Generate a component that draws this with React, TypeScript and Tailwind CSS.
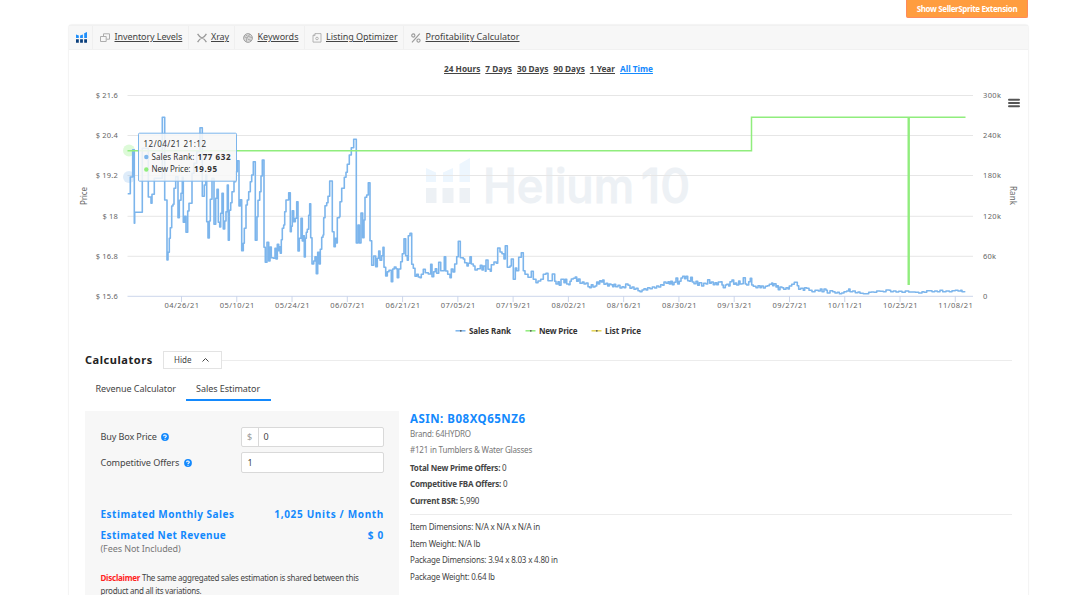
import React from 'react';

// Sales rank samples, grouped in blocks: each pair is (x, y) in thirds of a pixel from the block origin
const rankBlocks = [
  {
    x: 70, y: 85,
    points: '173,326 181,276 188,194 193,415 194,382 217,190 235,336 243,355 246,328 253,280 277,97 284,345 291,525 294,502 298,460 301,428 305,363 309,358 312,310 317,275 324,398 328,346 333,325 337,277 340,412 344,394 348,442 353,378 357,355 366,265 372,235 380,200 390,128 397,334 403,300 407,270 410,410 414,459 418,408 421,343 426,280 432,418 437,340 441,313 445,412 449,426 452,385 456,325 460,432 464,408 468,380 472,300 475,466 478,376 482,353 486,320 492,290 497,260 502,227 507,363 511,344 515,497 520,475 523,430 528,360 532,345 536,320 541,290 545,270 550,230 556,466 561,395 564,346 569,320 573,273 577,225',
  },
  {
    x: 250, y: 85,
    points: '42,487 46,532 51,472 56,528 60,486 64,518 70,520 75,490 78,522 82,478 86,497 89,485 91,505 94,464 97,430 101,420 104,380 108,345 116,323 121,440 124,424 127,377 131,410 136,400 140,350 144,498 148,460 153,400 157,468 160,452 163,516 166,460 169,442 172,433 176,391 179,356 182,458 186,537 191,528 195,515 199,566 203,502 208,537 211,493 215,457 219,450 221,398 225,362 230,353 234,334 239,288 247,440 252,485 256,460 260,474 262,398 268,395 270,350 275,310 283,277 288,262 292,238 298,210 304,188 311,163 319,474 324,420 328,474 333,384 338,458 342,405 345,337 350,330 355,293 360,467 365,541 371,513 377,545 382,520 386,498 390,526 395,512 399,487 402,547 407,573 412,560 417,556 424,590 428,552 433,546 438,551 442,578 446,552 452,530 457,506 462,461 467,512 472,526 475,452 480,445 485,538 490,550 495,574 500,568 505,576',
  },
  {
    x: 420, y: 140,
    points: '0,413 4,403 10,388 16,398 25,402 32,373 36,410 41,395 46,386 50,400 56,367 62,392 69,392 73,350 77,393 83,403 90,413 94,387 99,396 104,372 110,350 115,304 121,353 130,357 134,368 141,378 145,370 150,350 154,372 160,378 165,390 172,386 181,376 186,390 190,378 196,394 198,360 204,388 211,394 214,374 222,366 229,370 233,324 240,336 246,341 252,357 256,317 262,382 270,378 274,357 280,418 286,384 290,392 296,352 304,338 310,392 315,403 324,412 334,394 340,418 348,428 354,423 362,418 370,403 378,400 384,422 397,402 404,424 408,432 414,425 418,436 423,418 428,418 432,428 436,418 440,432 446,434 450,424 454,417 460,415 466,411 470,424 475,417 480,430 487,426 492,432 498,429 504,440 509,443 514,434 519,441 525,438 530,426 535,432 539,422 544,426 548,420 552,433 558,430 563,438 568,432 573,434 578,440 582,433 587,440 594,436 600,444 606,440 612,443 617,432 624,436 630,445 636,441 642,448 648,445 654,452 660,455 666,450 672,446 678,450 683,443 690,446 697,441 704,444 710,438 716,441 722,434 728,436 732,426 738,430 744,425 748,432 752,424 757,434 762,427 768,414 773,432 778,424 783,414 788,409 794,416 798,409 803,422 808,424 812,412 817,426 822,431 828,424 833,436 838,428 845,438 851,430 858,432 863,419 869,430 874,426 880,434 885,428 890,434 895,426',
  },
  {
    x: 700, y: 85,
    points: '62,590 66,600 70,608 76,600 80,598 86,603 90,590 96,585 101,598 106,594 110,600 116,588 120,597 126,596 130,578 136,597 140,600 146,590 151,580 155,600 160,604 168,608 174,602 180,608 184,603 190,609 196,604 202,602 208,598 215,594 218,602 222,596 228,606 232,602 235,614 240,606 246,608 251,613 258,608 264,612 268,603 275,598 283,592 292,602 296,613 302,610 310,616 314,608 320,610 327,616 336,620 345,616 355,618 361,612 366,620 372,612 378,616 382,624 390,617 398,620 405,624 412,622 418,626 425,624 432,620 440,618 446,612 450,620 458,618 466,623 474,621 480,625 490,626 498,626 506,622 514,621 522,622 530,618 540,619 550,620 558,615 568,616 572,620 580,618 588,621 596,619 606,622 616,618 626,621 636,621 646,622 656,624 666,620 672,622 680,617 690,617 696,620 704,618 712,620 720,616 728,620 738,618 748,620 756,617 766,616 774,618 782,616 786,620 794,622',
  },
];

const rankPath = rankBlocks
  .flatMap(({ x, y, points }) =>
    points.split(' ').map((pair) => {
      const [px, py] = pair.split(',').map(Number);
      return [(x + px / 3).toFixed(1), (y + py / 3).toFixed(1)];
    })
  )
  .map(([x, y], i) => (i === 0 ? `M${x} ${y}` : `H${x}V${y}`))
  .join('');

const rows = [
  { y: 95.5, price: '$ 21.6', rank: '300k', rankWidth: 18 },
  { y: 135.5, price: '$ 20.4', rank: '240k', rankWidth: 18 },
  { y: 175.5, price: '$ 19.2', rank: '180k', rankWidth: 18 },
  { y: 216.3, price: '$ 18', rank: '120k', rankWidth: 18 },
  { y: 256.3, price: '$ 16.8', rank: '60k', rankWidth: 13 },
  { y: 296.3, price: '$ 15.6', rank: '0', rankWidth: 5 },
];

const dates = [
  '04/26/21', '05/10/21', '05/24/21', '06/07/21', '06/21/21', '07/05/21', '07/19/21', '08/02/21',
  '08/16/21', '08/30/21', '09/13/21', '09/27/21', '10/11/21', '10/25/21', '11/08/21',
];

const legend = [
  { x: 455, label: 'Sales Rank', width: 42, color: '#7cb5ec' },
  { x: 525, label: 'New Price', width: 38.5, color: '#90ed7d' },
  { x: 591, label: 'List Price', width: 36, color: '#e4d354' },
];

const HeliumMark: React.FC = () => (
  <svg className="h-[11px] w-[11px]" viewBox="0 0 11 11">
    <path fill="#1f8ffb" d="M0 2.5 2.8 3.6V6H0zM4.1 3.6 6.9 2.5V6H4.1zM8.2 1.2 11 0V6H8.2z" />
    <path fill="#0b3f7c" d="M0 7.2h2.8v3.6H0zM4.1 7.2h2.8v3.6H4.1zM8.2 7.2H11v3.6H8.2z" />
  </svg>
);

const iconClass = 'h-[10px] w-[10px] shrink-0';

const tools = [
  {
    label: 'Inventory Levels',
    cell: 'w-[96px] pl-[7px]',
    text: 'tracking-[-0.08px]',
    icon: (
      <svg className={iconClass} viewBox="0 0 10 10" fill="none" stroke="#adadad">
        <path d="M3.5 3V.8h6v5.4H6.5M.5 3.5h5.7v5H.5z" />
      </svg>
    ),
  },
  {
    label: 'Xray',
    cell: 'w-[46px] pl-[7.5px]',
    text: 'tracking-[-0.1px]',
    icon: (
      <svg className={iconClass} viewBox="0 0 10 10" fill="none" stroke="#999" strokeWidth="1.3">
        <path d="M.6.8C2 3.2 3.3 4.4 5 5c1.7.6 3 1.8 4.4 4.2M9.4.8C8 3.2 6.7 4.4 5 5 3.3 5.6 2 6.8.6 9.2" />
      </svg>
    ),
  },
  {
    label: 'Keywords',
    cell: 'w-[70px] pl-[8px]',
    text: 'tracking-[0px]',
    icon: (
      <svg className={iconClass} viewBox="0 0 10 10" fill="none" stroke="#a3a3a3">
        <circle cx="5" cy="5" r="4.4" fill="#d9d9d9" />
        <path d="M1 3.5 4 5l3-4M4 5l-1 4M5.5 3.5 9 4.5M5 6.2l3.5 1.5M2.5 2l2 1" strokeWidth=".9" />
      </svg>
    ),
  },
  {
    label: 'Listing Optimizer',
    cell: 'w-[99px] pl-[6.5px]',
    text: 'tracking-[-0.04px]',
    icon: (
      <svg className={iconClass} viewBox="0 0 10 10" fill="none" stroke="#adadad" strokeWidth=".9">
        <path d="M3 .6h6v8.5H1V2.6zM3 .6v2H1" />
        <circle cx="5" cy="5.5" r="1.3" />
      </svg>
    ),
  },
  {
    label: 'Profitability Calculator',
    cell: 'pl-[7px]',
    text: 'tracking-[0.02px]',
    icon: (
      <svg className={iconClass} viewBox="0 0 10 10" fill="none" stroke="#999" strokeWidth="1.1">
        <circle cx="2.3" cy="2.5" r="1.6" />
        <circle cx="7.5" cy="7.6" r="1.6" />
        <path d="M8.8.6 1 9.4" />
      </svg>
    ),
  },
];

const ranges = ['24 Hours', '7 Days', '30 Days', '90 Days', '1 Year', 'All Time'];

const Toolbar: React.FC = () => (
  <nav className="flex h-[25px] border-b border-t border-[#f1f1f1] bg-[#f7f7f7]">
    <div className="flex w-[24px] items-center border-r border-[#efefef] pl-[6.5px]">
      <HeliumMark />
    </div>
    {tools.map((tool) => (
      <a
        key={tool.label}
        className={`flex items-center gap-[4.5px] whitespace-nowrap border-r border-[#efefef] last:border-0 ${tool.cell}`}
      >
        {tool.icon}
        <span className={`-mt-px text-[9px] text-[#444] underline ${tool.text}`}>{tool.label}</span>
      </a>
    ))}
  </nav>
);

const Chart: React.FC = () => (
  <svg className="block h-[265px] w-[959px]" viewBox="69 80 959 265" fill="#666" fontSize="7.5">
    {/* Watermark */}
    <g>
      <path fill="#edf6fe" d="M426 168l10 4.5V182h-10zM443 172.5l10-4.500v14h-10zM459.5 164l10.5-6v24h-10.5z" />
      <path fill="#edf1f5" d="M426 188h10.5v15H426zM442.5 188h11v15h-11zM459.5 188H470v15h-10.5z" />
      <g fill="#edf1f5" stroke="#edf1f5" strokeWidth=".9" fontFamily="Inter" fontSize="48" fontWeight="500">
        <text x="483" y="202.5" textLength="151" lengthAdjust="spacingAndGlyphs">Helium</text>
        <text x="641" y="202.5" textLength="49" lengthAdjust="spacingAndGlyphs">10</text>
      </g>
    </g>

    {rows.map((row) => (
      <g key={row.price}>
        <path d={`M127.5 ${row.y}H973`} stroke={row.rank === '0' ? '#ccd6eb' : '#e6e6e6'} />
        <text x="118" y={row.y + 2.8} textAnchor="end" letterSpacing=".2">{row.price}</text>
        <text x="983" y={row.y + 2.8} textLength={row.rankWidth}>{row.rank}</text>
      </g>
    ))}

    {dates.map((date, i) => (
      <g key={date}>
        <path d={`M${181.5 + i * 55.27} 296v6`} stroke="#ccd6eb" />
        <text x={164.5 + i * 55.27} y="308.3" textLength="34.5">{date}</text>
      </g>
    ))}

    <text transform="translate(87.3 205) rotate(-90)" fontSize="8" textLength="18">Price</text>
    <text transform="translate(1009.5 186) rotate(90)" fontSize="8" textLength="19">Rank</text>

    <circle cx="129" cy="177" r="6" fill="#7cb5ec" opacity=".25" />
    <circle cx="129" cy="150.5" r="6" fill="#90ed7d" opacity=".3" />

    <path d={rankPath} fill="none" stroke="#7cb5ec" strokeWidth="1.6" strokeLinejoin="round" />
    <path d="M127.5 150.7H751.5V117.2H965.5" fill="none" stroke="#90ed7d" strokeWidth="1.5" />
    <path d="M908.7 117.2V285" stroke="#90ed7d" strokeWidth="2.4" />

    {/* Hovered point */}
    <rect x="138.5" y="133.2" width="98" height="48" rx="1" fill="#f7f7f7" fillOpacity=".87" stroke="#7cb5ec" />
    <g fill="#333">
      <text x="143.5" y="147" fontSize="8" textLength="62.5">12/04/21 21:12</text>
      <circle cx="146.3" cy="157" r="2.2" fill="#7cb5ec" />
      <text x="151.5" y="159.5" fontSize="8" textLength="43">Sales Rank:</text>
      <text x="197.5" y="159.5" fontSize="8" fontWeight="700" textLength="33">177 632</text>
      <circle cx="146.3" cy="169.5" r="2.2" fill="#90ed7d" />
      <text x="151.5" y="172" fontSize="8" textLength="39">New Price:</text>
      <text x="194" y="172" fontSize="8" fontWeight="700" textLength="23">19.95</text>
    </g>

    <path d="M1009 99.8h10M1009 103h10M1009 106.2h10" stroke="#555" strokeWidth="2" strokeLinecap="round" />

    {legend.map((item) => (
      <g key={item.label}>
        <path d={`M${item.x + 0.5} 330.8h10`} stroke={item.color} strokeWidth="1.5" />
        <circle cx={item.x + 5.8} cy="330.8" r=".9" fill="#555" />
        <text x={item.x + 14} y="333.7" fontSize="8" fontWeight="700" fill="#333" textLength={item.width}>
          {item.label}
        </text>
      </g>
    ))}
  </svg>
);

const Help: React.FC = () => (
  <svg className="h-[8px] w-[8px]" viewBox="0 0 8 8">
    <circle cx="4" cy="4" r="3.9" fill="#1389fd" />
    <path d="M2.7 3.2c0-1.7 2.6-1.6 2.6 0C5.3 4 4 4 4 5M4 5.7v1" fill="none" stroke="#fff" strokeWidth="1.1" />
  </svg>
);

const Estimator: React.FC = () => (
  <div className="h-[200px] w-[314px] shrink-0 bg-[#f7f7f7] pl-[16px] pr-[15px] pt-[15px]">
    <div className="flex h-[21px] items-center">
      <span className="text-[9.1px] tracking-[-0.14px]">Buy Box Price</span>
      <span className="ml-[4px]"><Help /></span>
      <div className="ml-auto flex h-[20px] w-[143px] rounded-[2px] border border-[#d9d9d9] bg-white text-[9px] leading-[18px]">
        <span className="w-[17px] border-r border-[#d9d9d9] text-center text-[#999]">$</span>
        <span className="pl-[5px]">0</span>
      </div>
    </div>
    <div className="mt-[5px] flex h-[21px] items-center">
      <span className="text-[9.1px] tracking-[-0.1px]">Competitive Offers</span>
      <span className="ml-[5px]"><Help /></span>
      <div className="ml-auto h-[21px] w-[143px] rounded-[2px] border border-[#d9d9d9] bg-white pl-[6px] text-[9px] leading-[19px]">1</div>
    </div>
    <div className="mt-[31px] flex h-[21px] items-center justify-between whitespace-nowrap text-[10px] font-bold text-[#1389fd]">
      <span className="tracking-[0.49px]">Estimated Monthly Sales</span>
      <span className="-mr-[0.5px] tracking-[0.66px]">1,025 Units / Month</span>
    </div>
    <div className="flex h-[21px] items-center justify-between whitespace-nowrap text-[10px] font-bold text-[#1389fd]">
      <span className="tracking-[0.42px]">Estimated Net Revenue</span>
      <span className="-mr-[0.5px] tracking-[0.7px]">$ 0</span>
    </div>
    <p className="-mt-[4px] text-[9px] leading-[13px] tracking-[-0.08px] text-[#777]">(Fees Not Included)</p>
    <p className="mt-[16px] whitespace-nowrap text-[8px] leading-[13px] tracking-[-0.25px]">
      <b className="text-[#f22]">Disclaimer</b> The same aggregated sales estimation is shared between this
      <br />
      product and all its variations.
    </p>
  </div>
);

const Product: React.FC = () => (
  <div className="ml-[11.5px] w-[602.5px] text-[8px] leading-[16.4px] tracking-[-0.19px]">
    <h3 className="h-[15px] text-[11.5px] font-bold leading-[16px] tracking-[0.5px] text-[#1389fd]">ASIN: B08XQ65NZ6</h3>
    <p className="text-[#777]">Brand: 64HYDRO</p>
    <p className="text-[#777]">#121 in Tumblers &amp; Water Glasses</p>
    <div className="mt-[1px] h-[55px] border-b border-[#ececec]">
      <p><b>Total New Prime Offers:</b> 0</p>
      <p><b>Competitive FBA Offers:</b> 0</p>
      <p><b>Current BSR:</b> 5,990</p>
    </div>
    <div className="mt-[4.5px]">
      <p>Item Dimensions: N/A x N/A x N/A in</p>
      <p>Item Weight: N/A lb</p>
      <p>Package Dimensions: 3.94 x 8.03 x 4.80 in</p>
      <p>Package Weight: 0.64 lb</p>
    </div>
  </div>
);

const App: React.FC = () => {
  return (
    <div className="h-[595px] overflow-hidden bg-white font-['Noto_Sans',sans-serif] text-[#444]">
      <div className="flex h-[25px] justify-end pr-[52px]">
        <button className="h-[18px] w-[122px] whitespace-nowrap rounded-b-[2px] border border-t-0 border-[#ff8a5c] bg-[#ff9d3f] text-[8px] font-bold leading-[16px] tracking-[-0.37px] text-white">
          Show SellerSprite Extension
        </button>
      </div>
      <div className="ml-[69px] h-[580px] w-[959px] rounded-t-[3px] shadow-[0_0_1px_1px_#f3f3f3]">
        <Toolbar />
        <div className="flex h-[30px] items-center justify-center gap-[5px] pb-0 pt-[8px] text-[8.25px] font-bold">
          {ranges.map((range) => (
            <a key={range} className="underline last:text-[#1389fd]">{range}</a>
          ))}
        </div>
        <Chart />
        <section className="pl-[15.5px] pr-[16px]">
          <div className="flex h-[30px] items-center">
            <h2 className="w-[78.5px] pl-[0.5px] text-[11px] font-bold tracking-[0.55px] text-[#222]">Calculators</h2>
            <button className="flex h-[18px] w-[59px] items-center gap-[11px] border border-[#e3e3e3] pl-[10px] text-[8px]">
              Hide
              <svg className="h-[4px] w-[7px]" viewBox="0 0 7 4" fill="none" stroke="#444">
                <path d="M.5 3.5l3-3 3 3" />
              </svg>
            </button>
            <span className="h-px flex-1 bg-[#ececec]" />
          </div>
          <div className="flex h-[26px] text-[9px] leading-[27px] tracking-[-0.05px]">
            <span className="w-[101.5px] pl-[11px]">Revenue Calculator</span>
            <span className="w-[85px] border-b-2 border-[#1389fd] pl-[10px]">Sales Estimator</span>
          </div>
          <div className="mt-[10px] flex">
            <Estimator />
            <Product />
          </div>
        </section>
      </div>
    </div>
  );
};

export default App;
